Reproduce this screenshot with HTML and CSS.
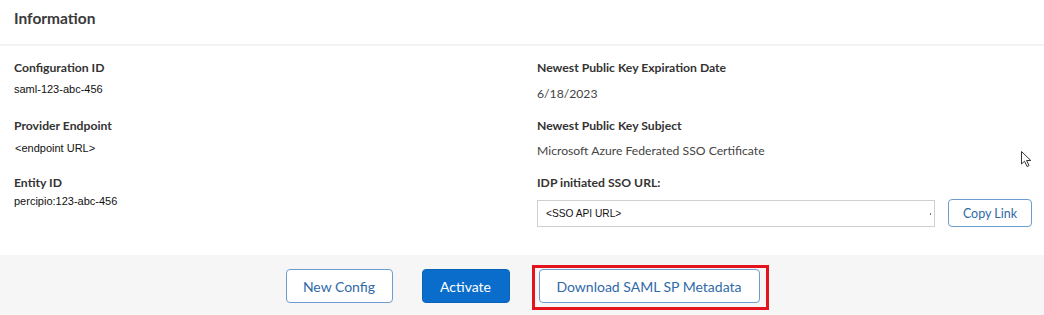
FILE: index.html
```html
<!DOCTYPE html>
<html>
<head>
<meta charset="utf-8">
<link rel="stylesheet" href="styles.css">
</head>
<body>
<div class="panel">
  <div class="header"><h2 class="title">Information</h2></div>
  <div class="content">
    <div class="col col-left">
      <div class="label l1">Configuration ID</div>
      <div class="val-arial v1">saml-123-abc-456</div>
      <div class="label l2">Provider Endpoint</div>
      <div class="val-arial v2">&lt;endpoint URL&gt;</div>
      <div class="label l3">Entity ID</div>
      <div class="val-arial v3">percipio:123-abc-456</div>
    </div>
    <div class="col col-right">
      <div class="label l1">Newest Public Key Expiration Date</div>
      <div class="val-lato rv1">6/18/2023</div>
      <div class="label l2b">Newest Public Key Subject</div>
      <div class="val-lato rv2">Microsoft Azure Federated SSO Certificate</div>
      <div class="label l3b">IDP initiated SSO URL:</div>
      <div class="url-row">
        <div class="url-input">&lt;SSO API URL&gt;<span class="dot"></span></div>
        <button class="btn btn-outline copy">Copy Link</button>
      </div>
    </div>
    <svg class="cursor" width="13" height="18" viewBox="0 0 13 18">
      <path d="M1.5 1.5 L1.5 14 L4.5 11.2 L7 16.5 L9 15.6 L6.6 10.5 L10.8 10.5 Z" fill="#fff" stroke="#333" stroke-width="1" stroke-linejoin="round"/>
    </svg>
  </div>
  <div class="footer">
    <button class="btn btn-outline">New Config</button>
    <button class="btn btn-primary">Activate</button>
    <span class="highlight"><button class="btn btn-outline">Download SAML SP Metadata</button></span>
  </div>
</div>
</body>
</html>
```

FILE: styles.css
```css
* { box-sizing: border-box; }
html, body { margin: 0; padding: 0; background: #fff; }
body { width: 1044px; height: 315px; overflow: hidden; font-family: Lato, "Liberation Sans", sans-serif; }

.panel { display: flex; flex-direction: column; height: 315px; }

.header { height: 46px; border-bottom: 2px solid #f3f3f3; padding: 8px 0 0 14px; }
.title { margin: 0; font-size: 15.5px; line-height: 20px; font-weight: 700; color: #3a3a3a; }

.content { position: relative; display: flex; height: 209px; padding-left: 14px; }
.col { display: flex; flex-direction: column; }
.col-left { width: 523px; }
.col-right { flex: 1; }

.label { font-size: 12.2px; line-height: 16px; font-weight: 700; color: #333; }
.val-arial { font-family: "Liberation Sans", Arial, sans-serif; font-size: 11px; line-height: 14px; color: #111; }
.val-lato { font-size: 12.2px; line-height: 16px; color: #444; }

.l1 { margin-top: 14px; }
.v1 { margin-top: 6px; }
.l2 { margin-top: 22px; }
.v2 { margin-top: 7px; padding-left: 1px; }
.l3 { margin-top: 20px; }
.v3 { margin-top: 3px; }

.rv1 { margin-top: 10px; }
.l2b { margin-top: 16px; }
.rv2 { margin-top: 9px; }
.l3b { margin-top: 16px; }

.url-row { display: flex; align-items: center; margin-top: 9px; }
.url-input { position: relative; width: 398px; height: 27px; border: 1px solid #cfcfcf; padding-left: 8px;
  font-family: "Liberation Sans", Arial, sans-serif; font-size: 10.2px; line-height: 25px; color: #111; }
.dot { position: absolute; right: 3px; top: 12px; width: 1px; height: 2px; background: #777; }

.btn { font-family: Lato, "Liberation Sans", sans-serif; font-size: 14px; border-radius: 4px; cursor: pointer; }
.btn-outline { background: #fff; color: #2f6aa8; border: 1px solid #6e9ccc; }
.btn-primary { background: #0b6dcb; color: #fff; border: 1px solid #0b63b8; }

.copy { margin-left: 13px; width: 84px; height: 28px; padding: 0; margin-top: -1px; font-size: 12.5px; }

.cursor { position: absolute; left: 1020px; top: 104px; }

.footer { flex: 1; background: #f6f6f6; display: flex; justify-content: center; align-items: flex-start; gap: 29px; padding-top: 14px; padding-left: 1px; }
.footer .btn { height: 34px; padding: 0 16px; }
.footer .btn-primary { width: 88px; padding: 0; }
.footer > .btn-outline { width: 107px; padding: 0; }
.highlight { position: relative; display: inline-block; }
.highlight .btn { width: 221px; padding: 0; display: block; }
.highlight::after { content: ""; position: absolute; left: -7px; right: -9px; top: -4px; bottom: -7px; border: 3px solid #e3141e; pointer-events: none; }
```
